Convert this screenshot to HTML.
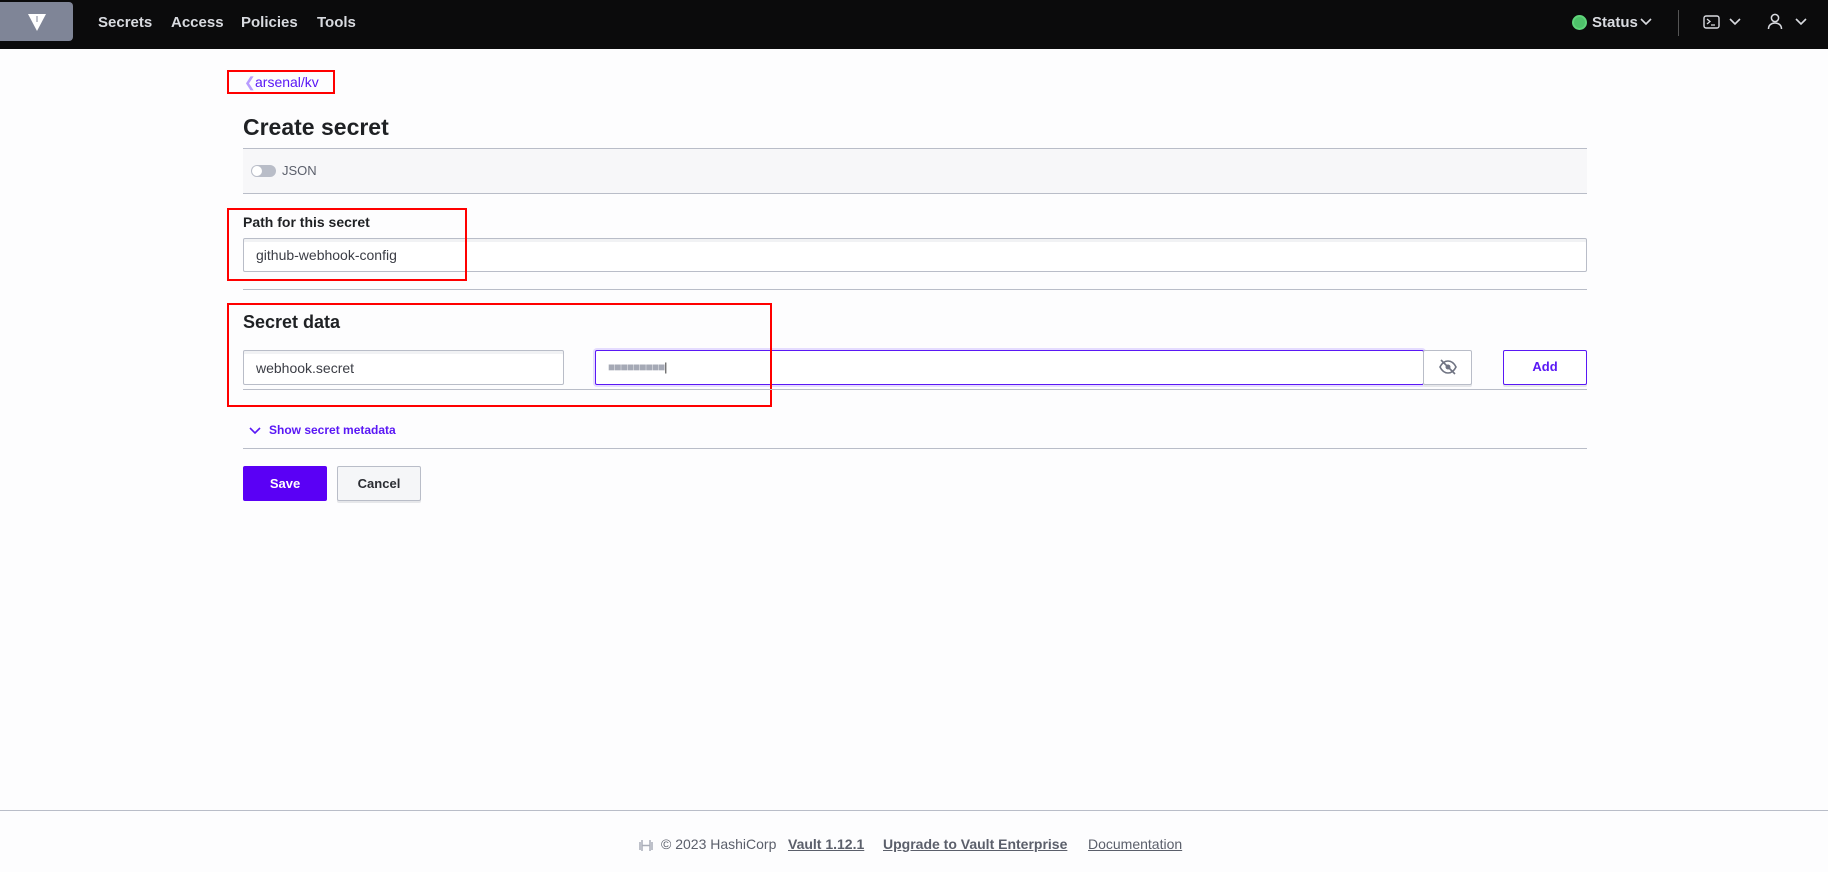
<!DOCTYPE html>
<html><head><meta charset="utf-8"><style>
*{box-sizing:border-box;margin:0;padding:0}
body{width:1828px;height:872px;background:#fdfdfe;font-family:"Liberation Sans",sans-serif;position:relative;overflow:hidden;color:#1f2124}
.a{position:absolute}
nav{position:absolute;left:0;top:0;width:1828px;height:49px;background:#0b0b0c}
.ni{position:absolute;top:14px;color:#d9dbe0;font-weight:bold;font-size:15px}
.inp{position:absolute;border:1px solid #b9bdc8;border-radius:2px;background:#fff;font-size:14px;color:#3b3d45;padding-left:12px;display:flex;align-items:center;box-shadow:inset 0 3px 0 #f1f2f4}
.hr{position:absolute;left:243px;width:1344px;height:1px;background:#b9bdc8}
.red{position:absolute;border:2px solid #f00}
</style></head><body>
<nav>
<div class="a" style="left:0;top:2px;width:73px;height:39px;background:#7f8597;border-radius:0 4px 4px 0"></div>
<svg class="a" style="left:27px;top:12px" width="20" height="20" viewBox="0 0 20 20"><path d="M1 2h18L10 19z" fill="#fff"/><path d="M9 5h2M9 7h2M9 9h2" stroke="#7f8597" stroke-width="1"/></svg>
<div class="ni" style="left:98px">Secrets</div>
<div class="ni" style="left:171px">Access</div>
<div class="ni" style="left:241px">Policies</div>
<div class="ni" style="left:317px">Tools</div>
<div class="a" style="left:1572px;top:15px;width:15px;height:15px;border-radius:50%;border:2px solid #5fd47a;background:#4ec26a"></div>
<div class="ni" style="left:1592px">Status</div>
<svg class="a" style="left:1640px;top:17px" width="12" height="10"><path d="M1 2l5 5 5-5" stroke="#d9dbe0" stroke-width="1.6" fill="none"/></svg>
<div class="a" style="left:1678px;top:10px;width:1px;height:26px;background:#555"></div>
<svg class="a" style="left:1703px;top:15px" width="17" height="14"><rect x="1" y="1" width="15" height="12" rx="2" stroke="#d9dbe0" stroke-width="1.4" fill="none"/><path d="M4 4l3 2.5L4 9M8 10h4" stroke="#d9dbe0" stroke-width="1.3" fill="none"/></svg>
<svg class="a" style="left:1729px;top:17px" width="12" height="10"><path d="M1 2l5 5 5-5" stroke="#d9dbe0" stroke-width="1.6" fill="none"/></svg>
<svg class="a" style="left:1767px;top:13px" width="16" height="17"><circle cx="8" cy="5" r="3.6" stroke="#d9dbe0" stroke-width="1.5" fill="none"/><path d="M1.5 16c0-4 3-6 6.5-6s6.5 2 6.5 6" stroke="#d9dbe0" stroke-width="1.5" fill="none"/></svg>
<svg class="a" style="left:1795px;top:17px" width="12" height="10"><path d="M1 2l5 5 5-5" stroke="#d9dbe0" stroke-width="1.6" fill="none"/></svg>
</nav>
<div class="red" style="left:227px;top:70px;width:108px;height:24px"></div>
<div class="a" style="left:244px;top:74px;font-size:14px;color:#b89cff">&#10094;</div>
<div class="a" style="left:255px;top:74px;font-size:14px;color:#5a18f5">arsenal/kv</div>
<div class="a" style="left:243px;top:114px;font-size:23px;font-weight:bold;color:#1f2124">Create secret</div>
<div class="a" style="left:243px;top:148px;width:1344px;height:46px;background:#f7f7f9;border-top:1px solid #b9bdc8;border-bottom:1px solid #b9bdc8"></div>
<div class="a" style="left:251px;top:165px;width:25px;height:12px;border-radius:6px;background:#b9bdc8"></div>
<div class="a" style="left:252px;top:166px;width:10px;height:10px;border-radius:50%;background:#fff"></div>
<div class="a" style="left:282px;top:163px;font-size:13px;color:#5b5f6b">JSON</div>
<div class="a" style="left:243px;top:214px;font-size:14px;font-weight:bold">Path for this secret</div>
<div class="inp" style="left:243px;top:238px;width:1344px;height:34px">github-webhook-config</div>
<div class="red" style="left:227px;top:208px;width:240px;height:73px"></div>
<div class="hr" style="top:289px"></div>
<div class="a" style="left:243px;top:312px;font-size:18px;font-weight:bold">Secret data</div>
<div class="inp" style="left:243px;top:350px;width:321px;height:35px">webhook.secret</div>
<div class="inp" style="left:595px;top:350px;width:829px;height:35px;border:1.5px solid #5a18f5;box-shadow:0 0 0 2px #e5dcff;color:#a5a9b5;letter-spacing:-1px;font-size:12px;align-items:flex-start;padding-top:9px">■■■■■■■■■<span style="color:#333">|</span></div>
<div class="a" style="left:1423px;top:350px;width:49px;height:35px;border:1px solid #b9bdc8;border-radius:2px;background:#fff;box-shadow:0 2px 0 #e6e7ea"></div>
<svg class="a" style="left:1439px;top:359px" width="18" height="16" viewBox="0 0 18 16"><path d="M1 8c2-4 5-6 8-6s6 2 8 6c-2 4-5 6-8 6s-6-2-8-6z" stroke="#6f7382" stroke-width="1.6" fill="none"/><circle cx="9" cy="8" r="2.5" fill="#6f7382"/><path d="M2 1l14 14" stroke="#6f7382" stroke-width="1.6"/></svg>
<div class="a" style="left:1503px;top:350px;width:84px;height:35px;border:1.5px solid #5a18f5;border-radius:2px;background:#fff;color:#5a18f5;font-weight:bold;font-size:13px;text-align:center;line-height:32px;box-shadow:0 2px 0 #e6e7ea">Add</div>
<div class="red" style="left:227px;top:303px;width:545px;height:104px"></div>
<div class="hr" style="top:389px"></div>
<svg class="a" style="left:249px;top:426px" width="12" height="9"><path d="M1 2l5 5 5-5" stroke="#5a18f5" stroke-width="1.6" fill="none"/></svg>
<div class="a" style="left:269px;top:423px;font-size:12px;font-weight:bold;color:#5a18f5">Show secret metadata</div>
<div class="hr" style="top:448px"></div>
<div class="a" style="left:243px;top:466px;width:84px;height:35px;background:#5a00f5;border-radius:2px;color:#fff;font-weight:bold;font-size:13px;text-align:center;line-height:35px">Save</div>
<div class="a" style="left:337px;top:466px;width:84px;height:35px;background:#f5f6f8;border:1px solid #b9bdc8;border-radius:2px;color:#2b2d33;font-weight:bold;font-size:13px;text-align:center;line-height:33px;box-shadow:0 2px 0 #e6e7ea">Cancel</div>
<div class="a" style="left:0;top:810px;width:1828px;height:1px;background:#b9bdc8"></div>
<svg class="a" style="left:639px;top:838px" width="14" height="15"><path d="M3 2v11M11 2v11M3 7.5h8M1 4v8M13 4v8" stroke="#a9adb8" stroke-width="1.5" fill="none"/></svg>
<div class="a" style="left:661px;top:836px;font-size:14px;color:#5b5f6b">© 2023 HashiCorp</div>
<div class="a" style="left:788px;top:836px;font-size:14px;color:#5b5f6b;font-weight:bold;text-decoration:underline">Vault 1.12.1</div>
<div class="a" style="left:883px;top:836px;font-size:14px;color:#5b5f6b;font-weight:bold;text-decoration:underline">Upgrade to Vault Enterprise</div>
<div class="a" style="left:1088px;top:836px;font-size:14px;color:#5b5f6b;text-decoration:underline">Documentation</div>
</body></html>
